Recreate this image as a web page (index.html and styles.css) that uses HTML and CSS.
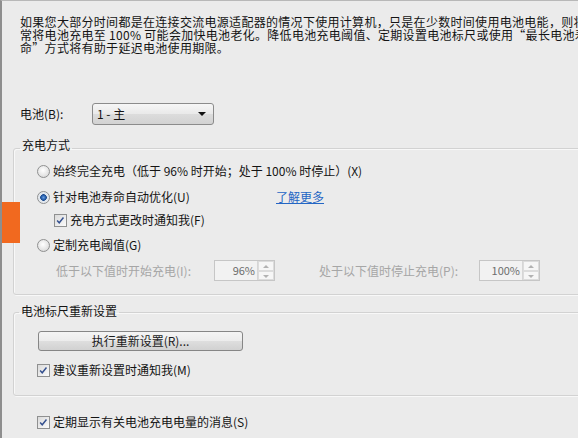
FILE: index.html
```html
<!DOCTYPE html>
<html lang="zh-CN">
<head>
  <meta charset="UTF-8">
  <title>电池设置</title>
  <link rel="stylesheet" href="styles.css">
</head>
<body>
  <!-- orange marker on the left edge -->
  <div class="edge-mark"></div>

  <p class="intro">如果您大部分时间都是在连接交流电源适配器的情况下使用计算机，只是在少数时间使用电池电能，则将<br>常将电池充电至 100% 可能会加快电池老化。降低电池充电阈值、定期设置电池标尺或使用“最长电池寿<br>命”方式将有助于延迟电池使用期限。</p>

  <div class="battery-row">
    <span class="battery-label">电池(B):</span>
    <div class="combo">
      <span class="combo-text">1 - 主</span>
      <span class="combo-arrow"></span>
    </div>
  </div>

  <!-- Charge mode -->
  <fieldset class="group group-charge">
    <legend>充电方式</legend>
    <div class="opt row-full">
      <span class="radio"></span>
      <span>始终完全充电（低于 96% 时开始；处于 100% 时停止）(X)</span>
    </div>
    <div class="opt row-auto">
      <span class="radio on"></span>
      <span class="opt-wide">针对电池寿命自动优化(U)</span>
      <a class="more-link" href="#">了解更多</a>
    </div>
    <div class="opt sub row-notify">
      <span class="check">
        <svg viewBox="0 0 13 13" width="11" height="11"><path d="M2.5 6.5 L5 9.2 L10 3" fill="none" stroke="#34508f" stroke-width="1.7"/></svg>
      </span>
      <span>充电方式更改时通知我(F)</span>
    </div>
    <div class="opt row-custom">
      <span class="radio"></span>
      <span>定制充电阈值(G)</span>
    </div>
    <div class="threshold-row">
      <span class="th-label">低于以下值时开始充电(I):</span>
      <div class="spin">
        <span class="spin-val">96%</span>
        <span class="spin-btns"><span class="spin-up"></span><span class="spin-down"></span></span>
      </div>
      <span class="th-label th-label-stop">处于以下值时停止充电(P):</span>
      <div class="spin">
        <span class="spin-val">100%</span>
        <span class="spin-btns"><span class="spin-up"></span><span class="spin-down"></span></span>
      </div>
    </div>
  </fieldset>

  <!-- Calibration -->
  <fieldset class="group group-calib">
    <legend>电池标尺重新设置</legend>
    <button class="btn" type="button">执行重新设置(R)...</button>
    <div class="opt row-suggest">
      <span class="check">
        <svg viewBox="0 0 13 13" width="11" height="11"><path d="M2.5 6.5 L5 9.2 L10 3" fill="none" stroke="#34508f" stroke-width="1.7"/></svg>
      </span>
      <span>建议重新设置时通知我(M)</span>
    </div>
  </fieldset>

  <div class="opt row-msg">
    <span class="check">
      <svg viewBox="0 0 13 13" width="11" height="11"><path d="M2.5 6.5 L5 9.2 L10 3" fill="none" stroke="#34508f" stroke-width="1.7"/></svg>
    </span>
    <span>定期显示有关电池充电电量的消息(S)</span>
  </div>
</body>
</html>
```

FILE: styles.css
```css
html, body {
  height: 100%;
}
body {
  margin: 0;
  background: #ebebeb;
  border-top: 1px solid #b8b8b8;
  border-left: 2px solid #8e8e8e;
  box-sizing: border-box;
  font-family: "Noto Sans CJK SC", sans-serif;
  font-size: 12px;
  line-height: 14px;
  color: #141414;
  overflow: hidden;
  position: relative;
}
.edge-mark {
  position: absolute;
  left: -2px;
  top: 201px;
  width: 20px;
  height: 41px;
  background: #f1691f;
}
.intro {
  margin: 14px 0 0 18px;
  line-height: 13px;
  white-space: nowrap;
  letter-spacing: 0.3px;
}

/* battery selector */
.battery-row {
  display: flex;
  align-items: center;
  margin: 49px 0 0 18px;
  height: 22px;
}
.battery-label {
  width: 72px;
}
.combo {
  width: 122px;
  height: 22px;
  box-sizing: border-box;
  border: 1px solid #8b8b8b;
  border-radius: 3px;
  background: linear-gradient(#f6f6f6, #e9e9e9 50%, #dcdcdc 51%, #d2d2d2);
  display: flex;
  align-items: center;
  padding: 0 7px 0 4px;
}
.combo-text {
  flex: 1;
  white-space: pre;
}
.combo-arrow {
  width: 0;
  height: 0;
  border-left: 4px solid transparent;
  border-right: 4px solid transparent;
  border-top: 4px solid #111;
}

/* group boxes */
.group {
  margin: 13px -20px 0 11px;
  padding: 0;
  border: 1px solid #d2d2d2;
  border-radius: 3px;
  box-shadow: inset 1px 1px 0 #f8f8f8, 1px 1px 0 #f8f8f8;
}
.group legend {
  margin-left: 6px;
  padding: 0 2px 6px;
  line-height: 14px;
}
.group-calib {
  margin-top: 9px;
  padding-bottom: 15px;
}
.group-calib legend {
  margin-left: 5px;
  padding-bottom: 2px;
}
.group-charge {
  padding-bottom: 13px;
}

/* option rows */
.opt {
  display: flex;
  align-items: center;
  height: 20px;
  padding-left: 23px;
  white-space: nowrap;
}
.opt.sub {
  padding-left: 40px;
}
.row-full { margin-top: 3px; }
.row-auto { margin-top: 6px; }
.row-notify { margin-top: 3px; }
.row-custom { margin-top: 5px; }
.row-suggest { margin-top: 9px; }
.row-msg {
  margin-top: 16px;
  padding-left: 35px;
}
.opt-wide {
  width: 223px;
}
.more-link {
  color: #2466c4;
  text-decoration: underline;
}

.radio {
  flex: none;
  width: 13px;
  height: 13px;
  box-sizing: border-box;
  border-radius: 50%;
  border: 1px solid #8f9090;
  background: radial-gradient(circle at 45% 40%, #ffffff, #e4e4e4 60%, #cdcdcd);
  margin-right: 3px;
}
.radio.on {
  background: radial-gradient(circle at 50% 50%, #6aa0e0 0, #2a62b0 2px, #1b4a8c 3px, #dde4ec 3.6px, #f3f3f3 100%);
}
.check {
  flex: none;
  width: 13px;
  height: 13px;
  box-sizing: border-box;
  border: 1px solid #8f9090;
  background: linear-gradient(135deg, #dadada, #fbfbfb);
  margin-right: 3px;
  display: flex;
  align-items: center;
  justify-content: center;
}

/* threshold inputs */
.threshold-row {
  display: flex;
  align-items: center;
  margin-top: 5px;
  padding-left: 42px;
  height: 21px;
  color: #a6a6a6;
  white-space: nowrap;
}
.th-label {
  width: 158px;
}
.th-label-stop {
  width: 160px;
  margin-left: 44px;
}
.spin {
  width: 61px;
  height: 21px;
  box-sizing: border-box;
  border: 1px solid #c6c6c6;
  background: #f2f2f2;
  display: flex;
}
.spin-val {
  flex: 1;
  text-align: right;
  padding-right: 2px;
  color: #6e6e6e;
  line-height: 19px;
  font-size: 11px;
}
.spin-btns {
  width: 16px;
  display: flex;
  flex-direction: column;
  border-left: 1px solid #d6d6d6;
}
.spin-up, .spin-down {
  flex: 1;
  border: 1px solid #dcdcdc;
  background: #f6f6f6;
  position: relative;
}
.spin-up::after, .spin-down::after {
  content: "";
  position: absolute;
  left: 4px;
  top: 3px;
  border-left: 3px solid transparent;
  border-right: 3px solid transparent;
}
.spin-up::after { border-bottom: 3px solid #b2b2b2; }
.spin-down::after { border-top: 3px solid #b2b2b2; }

.btn {
  display: block;
  margin: 11px 0 0 24px;
  width: 205px;
  height: 20px;
  padding: 0;
  border: 1px solid #868686;
  border-radius: 3px;
  background: linear-gradient(#f4f4f4, #ececec 50%, #dedede 51%, #d1d1d1);
  font: inherit;
  color: #1b1b1b;
  line-height: 18px;
}
```
